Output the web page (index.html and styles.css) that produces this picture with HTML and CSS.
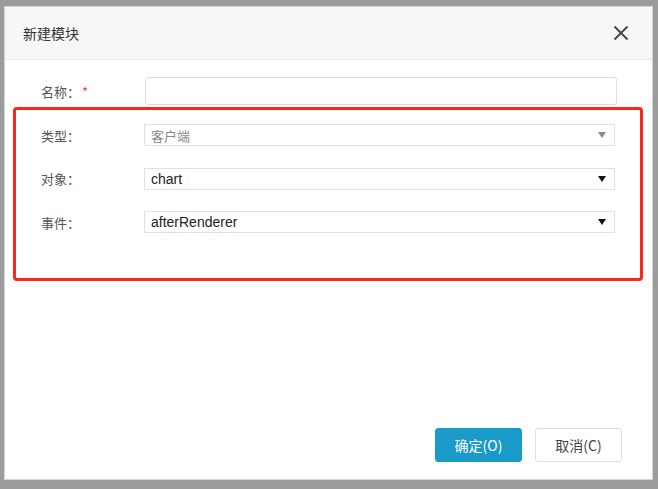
FILE: index.html
```html
<!DOCTYPE html>
<html lang="zh">
<head>
<meta charset="utf-8">
<title>新建模块</title>
<link rel="stylesheet" href="styles.css">
</head>
<body>
<div class="dialog">
  <div class="header">
    <span class="title">新建模块</span>
    <svg class="close" width="16" height="16" viewBox="0 0 16 16"><path d="M1.5 1.5L14.5 14.5M14.5 1.5L1.5 14.5" stroke="#444" stroke-width="1.8" fill="none"/></svg>
  </div>
  <div class="body">
    <div class="row name-row">
      <span class="label">名称：<span class="star">*</span></span>
      <div class="input"></div>
    </div>
    <div class="marked">
      <div class="row">
        <span class="label">类型：</span>
        <div class="select disabled"><span>客户端</span><svg width="8" height="6" viewBox="0 0 8 6"><path d="M0 0H8L4 6Z" fill="#888"/></svg></div>
      </div>
      <div class="row">
        <span class="label">对象：</span>
        <div class="select"><span>chart</span><svg width="8" height="6" viewBox="0 0 8 6"><path d="M0 0H8L4 6Z" fill="#111"/></svg></div>
      </div>
      <div class="row">
        <span class="label">事件：</span>
        <div class="select"><span>afterRenderer</span><svg width="8" height="6" viewBox="0 0 8 6"><path d="M0 0H8L4 6Z" fill="#111"/></svg></div>
      </div>
    </div>
  </div>
  <div class="footer">
    <button class="btn primary">确定(O)</button>
    <button class="btn">取消(C)</button>
  </div>
</div>
</body>
</html>
```
FILE: styles.css
```css
html, body {
  margin: 0;
  padding: 0;
  background: #9c9c9c;
  height: 100%;
  overflow: hidden;
}
body {
  font-family: "Noto Sans CJK SC", "Liberation Sans", sans-serif;
}
.dialog {
  margin: 6px 0 0 4px;
  width: 649px;
  height: 474px;
  box-sizing: border-box;
  background: #fff;
  border: 1px solid #d4d4d4;
  display: flex;
  flex-direction: column;
}
.header {
  height: 52px;
  background: #f7f7f7;
  border-bottom: 1px solid #e9e9e9;
  display: flex;
  align-items: center;
  justify-content: space-between;
  padding: 0 23px 0 18px;
}
.title {
  font-size: 14px;
  color: #333;
}
.close {
  display: block;
}
.body {
  flex: 1;
  display: flex;
  flex-direction: column;
  padding-top: 17px;
}
.row {
  display: flex;
  align-items: center;
}
.name-row {
  padding-left: 36px;
  margin-bottom: 2px;
}
.label {
  width: 104px;
  flex: none;
  font-size: 13px;
  color: #555;
}
.star {
  color: #f0483e;
  margin-left: 2px;
}
.input {
  width: 472px;
  height: 28px;
  box-sizing: border-box;
  border: 1px solid #dcdcdc;
  border-radius: 3px;
}
.marked {
  margin-left: 8px;
  width: 630px;
  height: 174px;
  box-sizing: border-box;
  border: 3px solid #fd2418;
  border-radius: 4px;
  padding: 14px 0 0 25px;
  display: flex;
  flex-direction: column;
  gap: 21.5px;
}
.marked .label {
  width: 103px;
}
.select {
  width: 471px;
  height: 22px;
  box-sizing: border-box;
  border: 1px solid #e0e0e0;
  display: flex;
  align-items: center;
  justify-content: space-between;
  padding: 0 8px 0 6px;
  font-family: "Liberation Sans", "Noto Sans CJK SC", sans-serif;
  font-size: 14px;
  color: #222;
}
.select.disabled {
  color: #888;
  font-family: "Noto Sans CJK SC", sans-serif;
  font-size: 13px;
}
.footer {
  display: flex;
  justify-content: flex-end;
  gap: 13px;
  padding: 0 30px 17px 0;
}
.btn {
  width: 87px;
  height: 34px;
  box-sizing: border-box;
  border: 1px solid #dedede;
  border-radius: 3px;
  background: #fff;
  color: #444;
  font-family: "Noto Sans CJK SC", sans-serif;
  font-size: 14px;
  padding: 0;
}
.btn.primary {
  background: #1a9ac8;
  border-color: #1a9ac8;
  color: #fff;
}
```
